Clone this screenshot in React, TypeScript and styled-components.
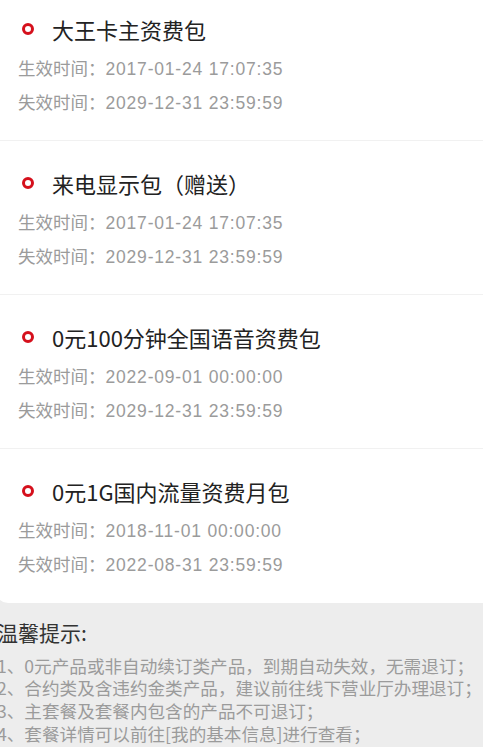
import React from "react";
import styled, { createGlobalStyle } from "styled-components";

const Global = createGlobalStyle`
  html, body { margin: 0; padding: 0; background: #ededed; overflow: hidden; }
  body { font-family: "Noto Sans CJK SC", "Noto Sans", sans-serif; }
`;

const Page = styled.div`
  width: 483px;
  height: 747px;
  overflow: hidden;
`;

const Card = styled.div`
  background: #ffffff;
  margin: -13px -12px 0 -4px;
  border-radius: 0 0 12px 12px;
`;

const Item = styled.div<{ $last?: boolean }>`
  height: 154px;
  box-sizing: border-box;
  padding-left: 22px;
  padding-top: 28px;
  border-bottom: ${(p) => (p.$last ? "none" : "1px solid #f1f1f1")};
`;

const TitleRow = styled.div`
  display: flex;
  align-items: center;
  height: 28px;
`;

const Ring = styled.span`
  width: 12px;
  height: 12px;
  box-sizing: border-box;
  border: 3px solid #d5101c;
  border-radius: 50%;
  margin-left: 4px;
  margin-right: 18px;
  flex: none;
`;

const Title = styled.span`
  font-size: 22px;
  line-height: 28px;
  color: #222222;
  white-space: nowrap;
`;

const Details = styled.div`
  margin-top: 8px;
`;

const Line = styled.div`
  font-size: 17.5px;
  line-height: 34px;
  height: 34px;
  color: #9b9b9b;
  white-space: nowrap;
`;

const Stamp = styled.span`
  font-family: "Liberation Sans", "Noto Sans", sans-serif;
  letter-spacing: 0.8px;
`;

const Tips = styled.div`
  padding: 14px 0 0 0;
  margin-left: -3px;
`;

const TipsTitle = styled.div`
  font-size: 21px;
  line-height: 30px;
  color: #333333;
`;

const TipsList = styled.div`
  margin-top: 7.6px;
`;

const TipLine = styled.div`
  font-size: 17.6px;
  line-height: 22.7px;
  color: #9b9b9b;
  white-space: nowrap;
`;

const items = [
  { title: "大王卡主资费包", start: "2017-01-24 17:07:35", end: "2029-12-31 23:59:59" },
  { title: "来电显示包（赠送）", start: "2017-01-24 17:07:35", end: "2029-12-31 23:59:59" },
  { title: "0元100分钟全国语音资费包", start: "2022-09-01 00:00:00", end: "2029-12-31 23:59:59" },
  { title: "0元1G国内流量资费月包", start: "2018-11-01 00:00:00", end: "2022-08-31 23:59:59" },
];

const tips = [
  "1、0元产品或非自动续订类产品，到期自动失效，无需退订；",
  "2、合约类及含违约金类产品，建议前往线下营业厅办理退订；",
  "3、主套餐及套餐内包含的产品不可退订；",
  "4、套餐详情可以前往[我的基本信息]进行查看；",
];

export default function App() {
  return (
    <Page>
      <Global />
      <Card>
        {items.map((it, i) => (
          <Item key={i} $last={i === items.length - 1}>
            <TitleRow>
              <Ring />
              <Title>{it.title}</Title>
            </TitleRow>
            <Details>
              <Line>
                生效时间：<Stamp>{it.start}</Stamp>
              </Line>
              <Line>
                失效时间：<Stamp>{it.end}</Stamp>
              </Line>
            </Details>
          </Item>
        ))}
      </Card>
      <Tips>
        <TipsTitle>温馨提示:</TipsTitle>
        <TipsList>
          {tips.map((t, i) => (
            <TipLine key={i}>{t}</TipLine>
          ))}
        </TipsList>
      </Tips>
    </Page>
  );
}
